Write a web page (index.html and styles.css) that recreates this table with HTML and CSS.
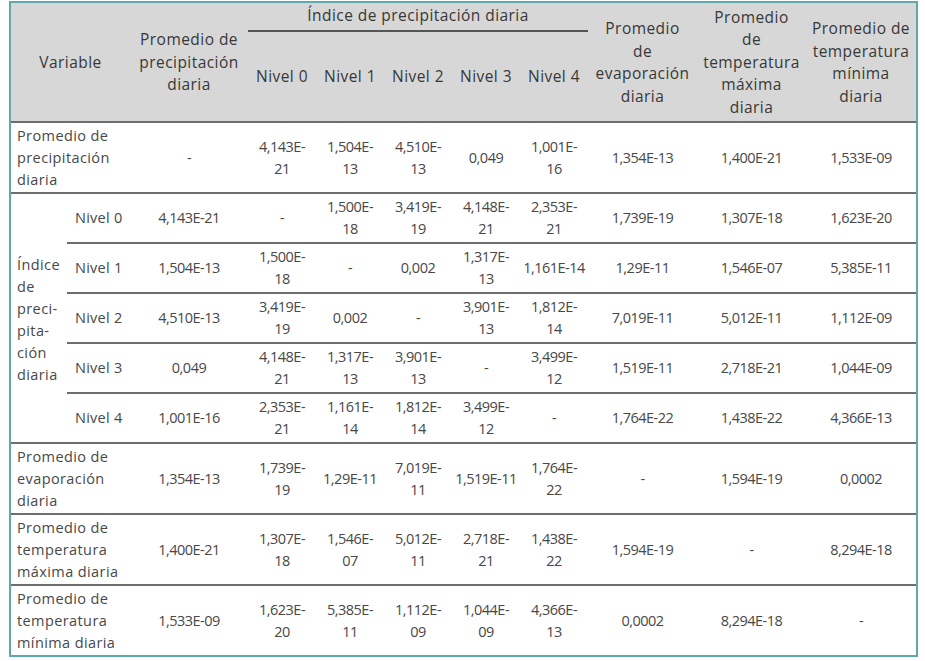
FILE: index.html
```html
<!DOCTYPE html>
<html lang="es">
<head>
<meta charset="utf-8">
<title>Tabla</title>
<link rel="stylesheet" href="styles.css">
</head>
<body>
<div class="frame">
<table class="data">
<colgroup>
<col class="c-idx"><col class="c-niv"><col class="c-pp">
<col class="c-n"><col class="c-n"><col class="c-n"><col class="c-n"><col class="c-n">
<col class="c-ev"><col class="c-tx"><col class="c-tn">
</colgroup>
<thead>
<tr class="h1">
<th colspan="2" rowspan="2">Variable</th>
<th rowspan="2">Promedio de<br>precipitación<br>diaria</th>
<th colspan="5" class="group">Índice de precipitación diaria</th>
<th rowspan="2">Promedio<br>de<br>evaporación<br>diaria</th>
<th rowspan="2">Promedio<br>de<br>temperatura<br>máxima<br>diaria</th>
<th rowspan="2">Promedio de<br>temperatura<br>mínima<br>diaria</th>
</tr>
<tr class="h2">
<th>Nivel 0</th><th>Nivel 1</th><th>Nivel 2</th><th>Nivel 3</th><th>Nivel 4</th>
</tr>
</thead>
<tbody>
<tr class="tall">
<td colspan="2" class="lbl">Promedio de<br>precipitación<br>diaria</td>
<td>-</td><td>4,143E-<br>21</td><td>1,504E-<br>13</td><td>4,510E-<br>13</td><td>0,049</td><td>1,001E-<br>16</td><td>1,354E-13</td><td>1,400E-21</td><td>1,533E-09</td>
</tr>
<tr class="lvl">
<td rowspan="5" class="lbl idx">Índice<br>de<br>preci-<br>pita-<br>ción<br>diaria</td>
<td class="lbl niv">Nivel 0</td>
<td>4,143E-21</td><td>-</td><td>1,500E-<br>18</td><td>3,419E-<br>19</td><td>4,148E-<br>21</td><td>2,353E-<br>21</td><td>1,739E-19</td><td>1,307E-18</td><td>1,623E-20</td>
</tr>
<tr class="lvl">
<td class="lbl niv">Nivel 1</td>
<td>1,504E-13</td><td>1,500E-<br>18</td><td>-</td><td>0,002</td><td>1,317E-<br>13</td><td>1,161E-14</td><td>1,29E-11</td><td>1,546E-07</td><td>5,385E-11</td>
</tr>
<tr class="lvl">
<td class="lbl niv">Nivel 2</td>
<td>4,510E-13</td><td>3,419E-<br>19</td><td>0,002</td><td>-</td><td>3,901E-<br>13</td><td>1,812E-<br>14</td><td>7,019E-11</td><td>5,012E-11</td><td>1,112E-09</td>
</tr>
<tr class="lvl">
<td class="lbl niv">Nivel 3</td>
<td>0,049</td><td>4,148E-<br>21</td><td>1,317E-<br>13</td><td>3,901E-<br>13</td><td>-</td><td>3,499E-<br>12</td><td>1,519E-11</td><td>2,718E-21</td><td>1,044E-09</td>
</tr>
<tr class="lvl">
<td class="lbl niv">Nivel 4</td>
<td>1,001E-16</td><td>2,353E-<br>21</td><td>1,161E-<br>14</td><td>1,812E-<br>14</td><td>3,499E-<br>12</td><td>-</td><td>1,764E-22</td><td>1,438E-22</td><td>4,366E-13</td>
</tr>
<tr class="tall">
<td colspan="2" class="lbl">Promedio de<br>evaporación<br>diaria</td>
<td>1,354E-13</td><td>1,739E-<br>19</td><td>1,29E-11</td><td>7,019E-<br>11</td><td>1,519E-11</td><td>1,764E-<br>22</td><td>-</td><td>1,594E-19</td><td>0,0002</td>
</tr>
<tr class="tall">
<td colspan="2" class="lbl">Promedio de<br>temperatura<br>máxima diaria</td>
<td>1,400E-21</td><td>1,307E-<br>18</td><td>1,546E-<br>07</td><td>5,012E-<br>11</td><td>2,718E-<br>21</td><td>1,438E-<br>22</td><td>1,594E-19</td><td>-</td><td>8,294E-18</td>
</tr>
<tr class="tall">
<td colspan="2" class="lbl">Promedio de<br>temperatura<br>mínima diaria</td>
<td>1,533E-09</td><td>1,623E-<br>20</td><td>5,385E-<br>11</td><td>1,112E-<br>09</td><td>1,044E-<br>09</td><td>4,366E-<br>13</td><td>0,0002</td><td>8,294E-18</td><td>-</td>
</tr>
</tbody>
</table>
</div>
</body>
</html>
```

FILE: styles.css
```css
html, body {
  margin: 0;
  padding: 0;
  background: #ffffff;
}
body {
  padding: 1px 0 0 9px;
  font-family: "Open Sans", "DejaVu Sans", sans-serif;
}
.frame {
  width: 905px;
  border: 2px solid #5ea9aa;
}
.data {
  width: 905px;
  table-layout: fixed;
  border-collapse: separate;
  border-spacing: 0;
  font-size: 14.5px;
  letter-spacing: -0.5px;
  color: #484848;
}
.c-idx { width: 56px; }
.c-niv { width: 63px; }
.c-pp { width: 118px; }
.c-n { width: 68px; }
.c-ev { width: 109px; }
.c-tx { width: 109px; }
.c-tn { width: 110px; }

.data th, .data td {
  padding: 0;
  white-space: nowrap;
  text-align: center;
  vertical-align: middle;
  box-sizing: border-box;
}
.data thead th {
  background: #d7d7d7;
  color: #383838;
  font-weight: 500;
  font-size: 15.5px;
  letter-spacing: 0.45px;
  line-height: 22.5px;
}
.h1 th { height: 29px; }
.h2 th { height: 89px; }
.data th.group {
  border-bottom: 2px solid #555;
  padding-bottom: 3px;
}
.data tbody td {
  border-top: 2px solid #6e6e6e;
  line-height: 22px;
}
.tall td { height: 71px; }
.lvl td { height: 50px; }
.data td.lbl {
  text-align: left;
  padding-left: 6px;
  letter-spacing: 0.4px;
}
.data td.niv {
  padding-left: 8px;
  letter-spacing: 0.25px;
}
.data td.idx {
  padding-top: 4px;
}
```
